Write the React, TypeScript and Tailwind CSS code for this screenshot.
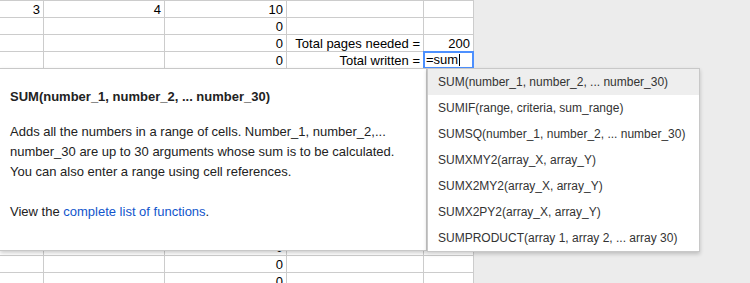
import React from "react";

const rows: string[][] = [
  ["3", "4", "10", "", ""],
  ["", "", "0", "", ""],
  ["", "", "0", "Total pages needed =", "200"],
  ["", "", "0", "Total written =", ""],
  ...Array.from({ length: 10 }, () => ["", "", "", "", ""]),
  ...Array.from({ length: 3 }, () => ["", "", "0", "", ""]),
];

const suggestions = [
  "SUM(number_1, number_2, ... number_30)",
  "SUMIF(range, criteria, sum_range)",
  "SUMSQ(number_1, number_2, ... number_30)",
  "SUMXMY2(array_X, array_Y)",
  "SUMX2MY2(array_X, array_Y)",
  "SUMX2PY2(array_X, array_Y)",
  "SUMPRODUCT(array 1, array 2, ... array 30)",
];

function Row({ c }: { c: string[] }) {
  const cell = "shrink-0 border-r border-[#cccccc] pr-[3px] text-right leading-[17px] whitespace-nowrap";
  return (
    <div className="flex h-[17px] border-b border-[#cccccc]">
      <div className={`w-[44px] ${cell}`}>{c[0]}</div>
      <div className={`w-[121px] ${cell}`}>{c[1]}</div>
      <div className={`w-[122px] ${cell}`}>{c[2]}</div>
      <div className={`w-[137px] ${cell}`}>{c[3]}</div>
      <div className={`w-[50px] ${cell}`}>{c[4]}</div>
    </div>
  );
}

export default function App() {
  return (
    <div
      className="relative flex h-[283px] w-[750px] overflow-hidden bg-[#ececec] text-[13px] text-black"
      style={{ fontFamily: '"Liberation Sans", Arial, sans-serif' }}
    >
      <div className="w-[474px] shrink-0 border-t border-[#cccccc] bg-white">
        {rows.map((r, i) => (
          <Row key={i} c={r} />
        ))}
      </div>

      {/* editing cell */}
      <div className="absolute left-[423px] top-[51px] h-[18px] w-[51px] border-2 border-[#4d90fe] bg-white pl-[1px] leading-[14px]">
        <span>=sum</span>
        <span className="ml-[1px] inline-block h-[12px] w-px bg-black align-[-2px]" />
      </div>

      {/* help popup */}
      <div className="absolute left-0 top-[68px] h-[183px] w-[427px] border-y border-r border-[#c8c8c8] bg-white pl-[10px] pt-[18px] text-[#222] shadow-[0_2px_4px_rgba(0,0,0,0.2)]">
        <div className="whitespace-nowrap font-bold leading-[20px]">SUM(number_1, number_2, ... number_30)</div>
        <p className="mt-[15px] whitespace-nowrap leading-[20px]">
          Adds all the numbers in a range of cells. Number_1, number_2,...
          <br />
          number_30 are up to 30 arguments whose sum is to be calculated.
          <br />
          You can also enter a range using cell references.
        </p>
        <p className="mt-[20px] whitespace-nowrap leading-[20px]">
          View the <span className="text-[#1155cc]">complete list of functions</span>.
        </p>
      </div>

      {/* suggestion dropdown */}
      <div className="absolute left-[427px] top-[68px] w-[273px] border border-[#c8c8c8] bg-white text-[12px] text-[#333] shadow-[0_2px_4px_rgba(0,0,0,0.2)]">
        {suggestions.map((s, i) => (
          <div
            key={s}
            className={`flex h-[26px] items-center whitespace-nowrap px-[10px] ${i === 0 ? "bg-[#eeeeee]" : ""}`}
          >
            {s}
          </div>
        ))}
      </div>
    </div>
  );
}
